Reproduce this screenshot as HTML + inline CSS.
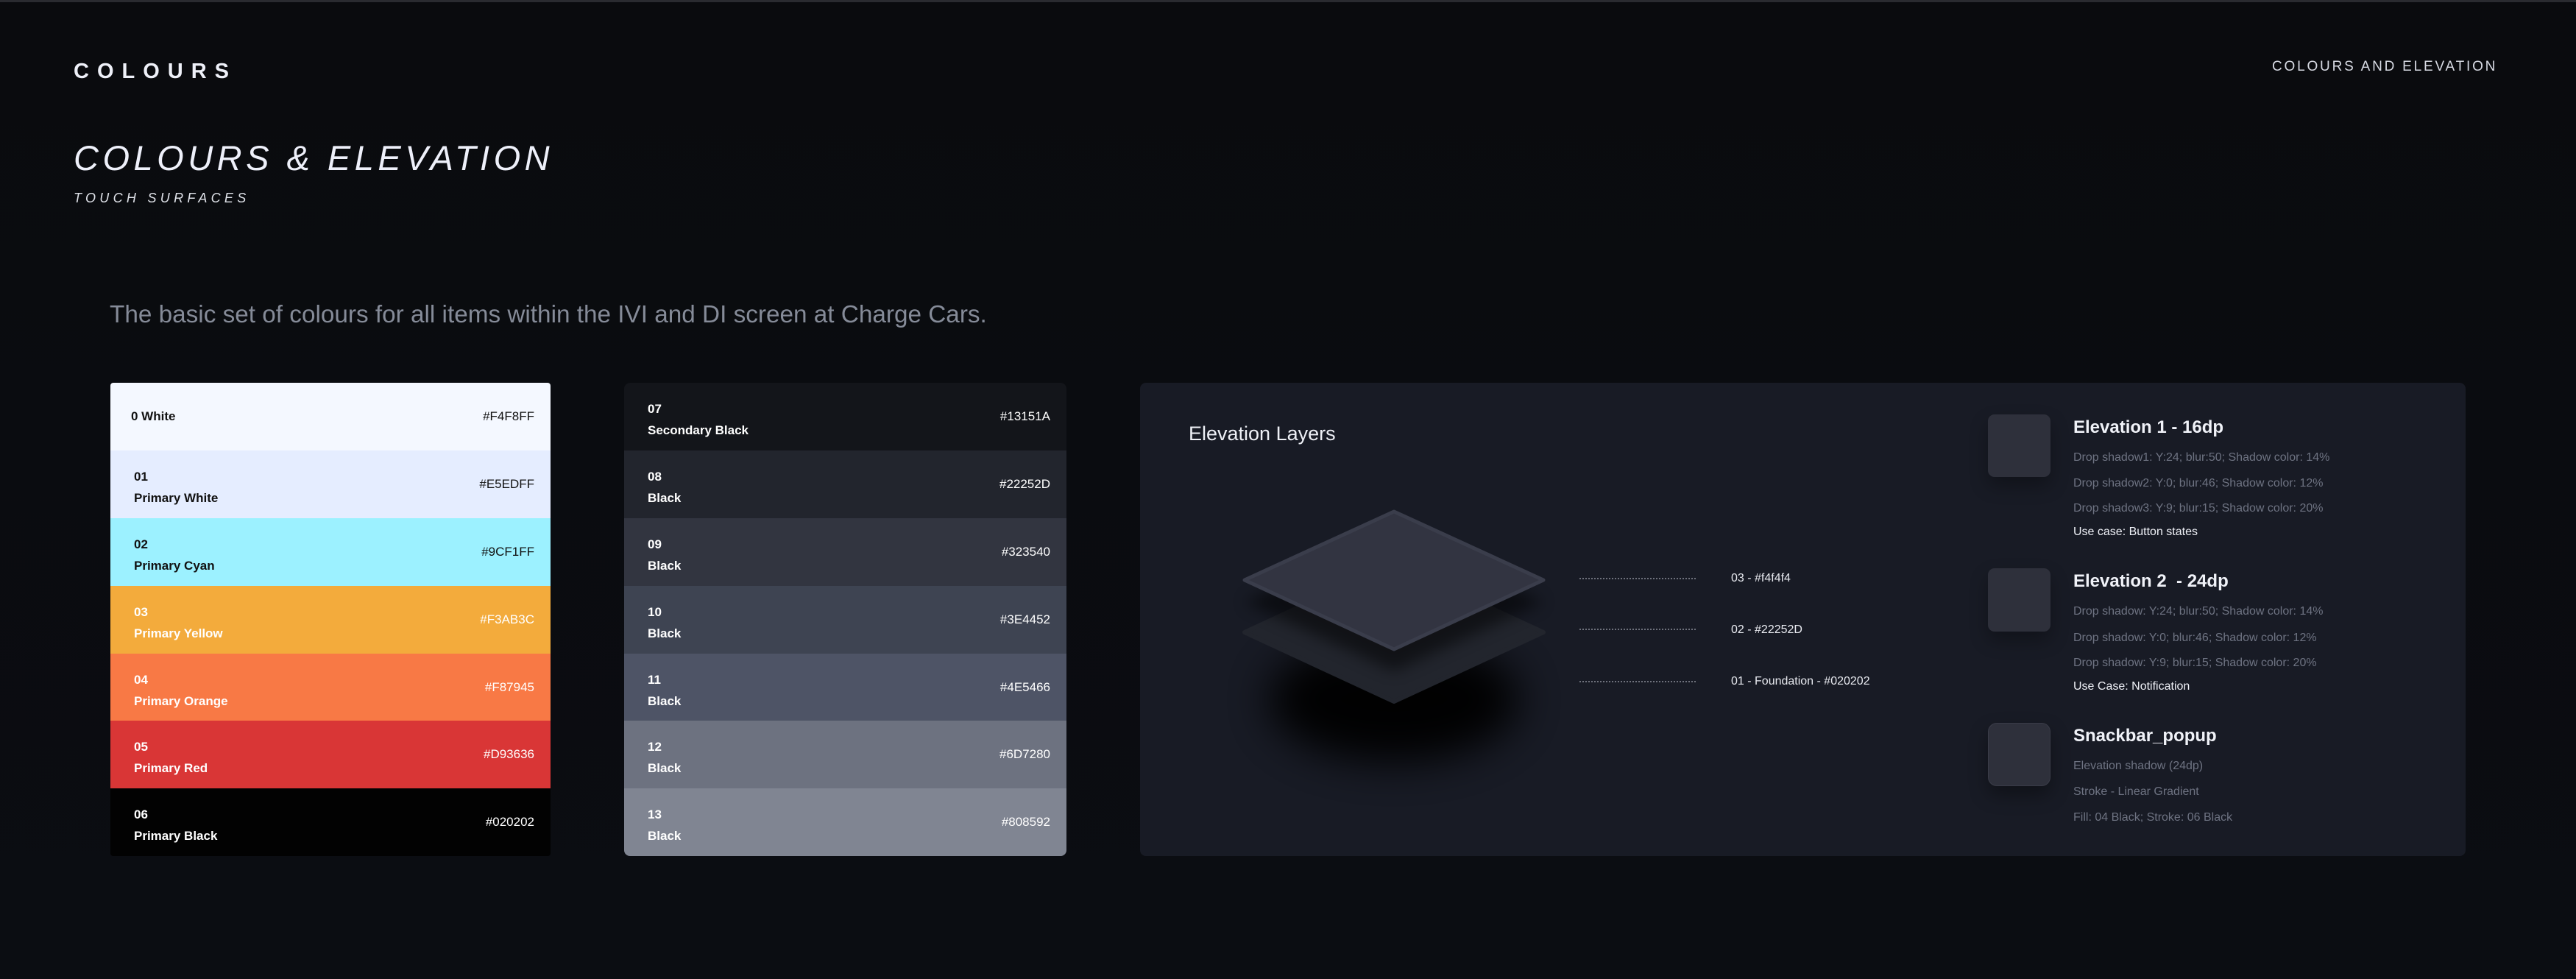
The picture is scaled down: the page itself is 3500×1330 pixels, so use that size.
<!DOCTYPE html>
<html><head><meta charset="utf-8"><style>
*{margin:0;padding:0;box-sizing:border-box}
body{width:3500px;height:1330px;background:linear-gradient(180deg,#0a0b0e 0%,#0b0d12 100%);font-family:"Liberation Sans",sans-serif;position:relative;overflow:hidden}
.a{position:absolute;white-space:nowrap}
.card{position:absolute;top:520px;height:643px;overflow:hidden}
.row{height:91.9px;position:relative}
.row .n{position:absolute;left:32px;top:26px;font-size:17px;font-weight:bold}
.row .m{position:absolute;left:32px;top:55px;font-size:17px;font-weight:bold}
.row .s{position:absolute;left:28px;top:36px;font-size:17px;font-weight:bold}
.row .h{position:absolute;right:22px;top:36px;font-size:17px}
.g{color:#6e7382;font-size:16px}
</style></head><body>
<div class="a" style="left:0;top:0;width:3500px;height:3px;background:#2a2b30"></div>
<div class="a" style="left:100px;top:81px;font-size:29px;font-weight:bold;letter-spacing:11px;color:#eef0f8">COLOURS</div>
<div class="a" style="left:3087px;top:80px;font-size:19px;letter-spacing:2.8px;color:#d8dbe4">COLOURS AND ELEVATION</div>
<div class="a" style="left:100px;top:187px;font-size:47px;font-style:italic;letter-spacing:5.5px;color:#eef0fa">COLOURS &amp; ELEVATION</div>
<div class="a" style="left:100px;top:259px;font-size:18px;font-style:italic;letter-spacing:5.3px;color:#e0e3ea">TOUCH SURFACES</div>
<div class="a" style="left:149px;top:409px;font-size:33.3px;color:#858b98">The basic set of colours for all items within the IVI and DI screen at Charge Cars.</div>

<div class="card" style="left:150px;width:598px;border-radius:4px">
<div class="row" style="background:#f4f8ff;color:#111"><div class="s">0 White</div><div class="h">#F4F8FF</div></div>
<div class="row" style="background:#e5edff;color:#111"><div class="n">01</div><div class="m">Primary White</div><div class="h">#E5EDFF</div></div>
<div class="row" style="background:#9cf1ff;color:#111"><div class="n">02</div><div class="m">Primary Cyan</div><div class="h">#9CF1FF</div></div>
<div class="row" style="background:#f3ab3c;color:#fff"><div class="n">03</div><div class="m">Primary Yellow</div><div class="h">#F3AB3C</div></div>
<div class="row" style="background:#f87945;color:#fff"><div class="n">04</div><div class="m">Primary Orange</div><div class="h">#F87945</div></div>
<div class="row" style="background:#d93636;color:#fff"><div class="n">05</div><div class="m">Primary Red</div><div class="h">#D93636</div></div>
<div class="row" style="background:#020202;color:#fff"><div class="n">06</div><div class="m">Primary Black</div><div class="h">#020202</div></div>
</div>

<div class="card" style="left:848px;width:601px;border-radius:8px;color:#fff">
<div class="row" style="background:#13151a"><div class="n">07</div><div class="m">Secondary Black</div><div class="h">#13151A</div></div>
<div class="row" style="background:#22252d"><div class="n">08</div><div class="m">Black</div><div class="h">#22252D</div></div>
<div class="row" style="background:#323540"><div class="n">09</div><div class="m">Black</div><div class="h">#323540</div></div>
<div class="row" style="background:#3e4452"><div class="n">10</div><div class="m">Black</div><div class="h">#3E4452</div></div>
<div class="row" style="background:#4e5466"><div class="n">11</div><div class="m">Black</div><div class="h">#4E5466</div></div>
<div class="row" style="background:#6d7280"><div class="n">12</div><div class="m">Black</div><div class="h">#6D7280</div></div>
<div class="row" style="background:#808592"><div class="n">13</div><div class="m">Black</div><div class="h">#808592</div></div>
</div>

<div class="card" style="left:1549px;width:1801px;border-radius:8px;background:#181b25"></div>
<svg class="a" style="left:1549px;top:520px" width="1801" height="643">
<defs><filter id="b" x="-50%" y="-50%" width="200%" height="200%"><feGaussianBlur stdDeviation="28"/></filter>
<filter id="b2" x="-50%" y="-50%" width="200%" height="200%"><feGaussianBlur stdDeviation="10"/></filter></defs>
<ellipse cx="345" cy="430" rx="170" ry="85" fill="#000" filter="url(#b)" opacity="0.95"/>
<path d="M345,245 L548,339 L345,433 L142,339 Z" fill="#22252d" stroke="#22252d" stroke-width="6" stroke-linejoin="round"/>
<path d="M345,190 L548,284 L345,378 L142,284 Z" fill="#000" opacity="0.5" filter="url(#b2)" transform="translate(0,14)"/>
<path d="M345,175 L548,268 L345,362 L142,268 Z" fill="#323441" stroke="#3a3d4b" stroke-width="5" stroke-linejoin="round"/>
<g stroke="#8a8e99" stroke-width="1.5" stroke-dasharray="2 2"><line x1="597" y1="266" x2="757" y2="266"/><line x1="597" y1="335" x2="757" y2="335"/><line x1="597" y1="406" x2="757" y2="406"/></g>
</svg>
<div class="a" style="left:1615px;top:574px;font-size:27px;color:#eef0f6">Elevation Layers</div>
<div class="a" style="left:2352px;top:777px;font-size:16px;color:#e8eaf0">03 - #f4f4f4</div>
<div class="a" style="left:2352px;top:847px;font-size:16px;color:#e8eaf0">02 - #22252D</div>
<div class="a" style="left:2352px;top:917px;font-size:16px;color:#e8eaf0">01 - Foundation - #020202</div>

<div class="a" style="left:2701px;top:563px;width:85px;height:85px;border-radius:9px;background:#2e303b;box-shadow:0 12px 25px rgba(0,0,0,.3)"></div>
<div class="a" style="left:2701px;top:772px;width:85px;height:86px;border-radius:9px;background:#2e303b;box-shadow:0 12px 25px rgba(0,0,0,.3)"></div>
<div class="a" style="left:2701px;top:982px;width:85px;height:86px;border-radius:12px;background:#2e303b;border:1px solid #3a3c48;box-shadow:0 12px 25px rgba(0,0,0,.35)"></div>

<div class="a" style="left:2817px;top:567px;font-size:24px;font-weight:bold;color:#f0f2f8">Elevation 1 - 16dp</div>
<div class="a g" style="left:2817px;top:613px">Drop shadow1: Y:24; blur:50; Shadow color: 14%</div>
<div class="a g" style="left:2817px;top:648px">Drop shadow2: Y:0; blur:46; Shadow color: 12%</div>
<div class="a g" style="left:2817px;top:682px">Drop shadow3: Y:9; blur:15; Shadow color: 20%</div>
<div class="a" style="left:2817px;top:714px;font-size:16px;color:#f0f2f8">Use case: Button states</div>

<div class="a" style="left:2817px;top:776px;font-size:24px;font-weight:bold;color:#f0f2f8">Elevation 2&nbsp; - 24dp</div>
<div class="a g" style="left:2817px;top:822px">Drop shadow: Y:24; blur:50; Shadow color: 14%</div>
<div class="a g" style="left:2817px;top:858px">Drop shadow: Y:0; blur:46; Shadow color: 12%</div>
<div class="a g" style="left:2817px;top:892px">Drop shadow: Y:9; blur:15; Shadow color: 20%</div>
<div class="a" style="left:2817px;top:924px;font-size:16px;color:#f0f2f8">Use Case: Notification</div>

<div class="a" style="left:2817px;top:986px;font-size:24px;font-weight:bold;color:#f0f2f8">Snackbar_popup</div>
<div class="a g" style="left:2817px;top:1032px">Elevation shadow (24dp)</div>
<div class="a g" style="left:2817px;top:1067px">Stroke - Linear Gradient</div>
<div class="a g" style="left:2817px;top:1102px">Fill: 04 Black; Stroke: 06 Black</div>
</body></html>
